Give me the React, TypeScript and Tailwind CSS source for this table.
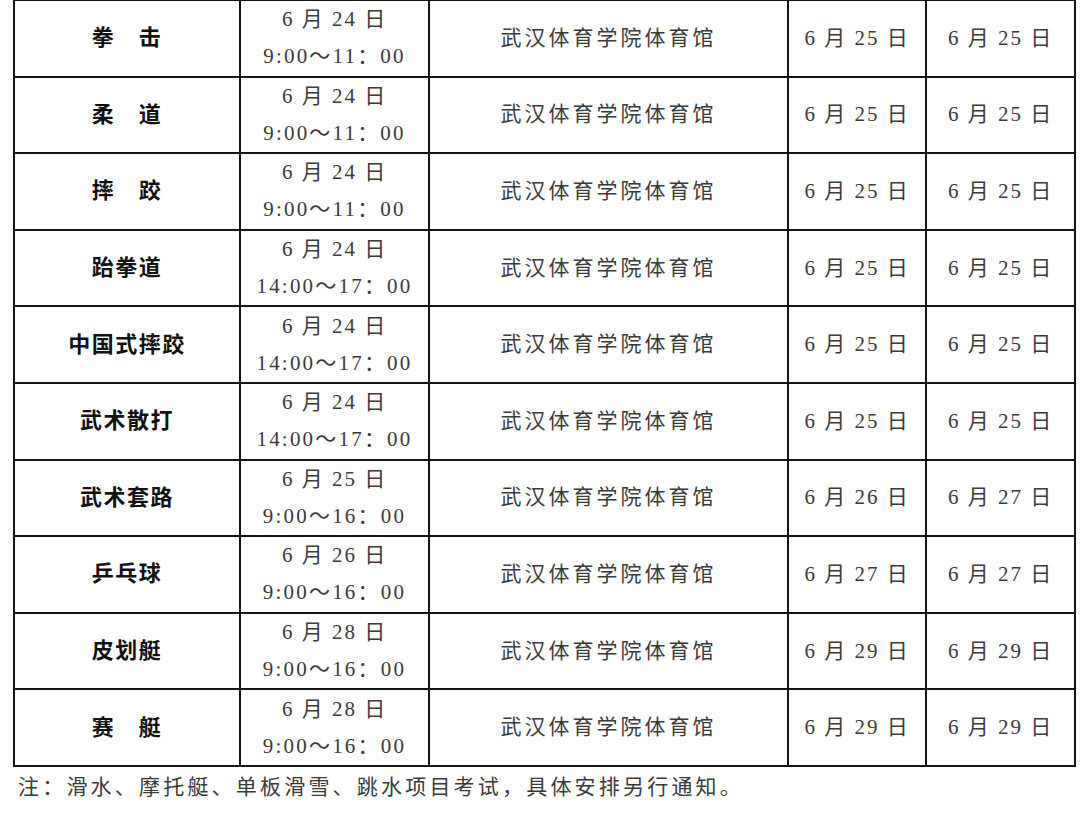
type Row = {
  name: string;
  day: string;
  time: string;
  d1: string;
  d2: string;
};

const rows: Row[] = [
  { name: "拳　击", day: "24", time: "9:00～11：00", d1: "25", d2: "25" },
  { name: "柔　道", day: "24", time: "9:00～11：00", d1: "25", d2: "25" },
  { name: "摔　跤", day: "24", time: "9:00～11：00", d1: "25", d2: "25" },
  { name: "跆拳道", day: "24", time: "14:00～17：00", d1: "25", d2: "25" },
  { name: "中国式摔跤", day: "24", time: "14:00～17：00", d1: "25", d2: "25" },
  { name: "武术散打", day: "24", time: "14:00～17：00", d1: "25", d2: "25" },
  { name: "武术套路", day: "25", time: "9:00～16：00", d1: "26", d2: "27" },
  { name: "乒乓球", day: "26", time: "9:00～16：00", d1: "27", d2: "27" },
  { name: "皮划艇", day: "28", time: "9:00～16：00", d1: "29", d2: "29" },
  { name: "赛　艇", day: "28", time: "9:00～16：00", d1: "29", d2: "29" },
];

const cell =
  "flex flex-col items-center justify-center border-r-2 border-b-2 border-[#151515] h-[76.6px]";

export default function App() {
  return (
    <div
      className="min-h-screen w-[1080px] bg-white text-[#3a3a3a] overflow-hidden"
      style={{ fontFamily: '"Liberation Serif", "Noto Sans CJK SC", serif' }}
    >
      <div className="ml-[13px] w-[1063px] border-l-2 border-t border-[#151515]">
        {rows.map((r, i) => (
          <div
            key={i}
            className="grid grid-cols-[226px_189px_359px_138px_149px]"
          >
            <div className={cell}>
              <span className="text-[22px] font-bold tracking-[1.5px] text-[#111] leading-none">
                {r.name}
              </span>
            </div>
            <div className={cell}>
              <span className="text-[21px] leading-[37px] tracking-[2px]">
                6 月 {r.day} 日
              </span>
              <span className="text-[21px] leading-[37px] tracking-[2.2px]">
                {r.time}
              </span>
            </div>
            <div className={cell}>
              <span className="text-[21px] tracking-[3px] leading-none">
                武汉体育学院体育馆
              </span>
            </div>
            <div className={cell}>
              <span className="text-[21px] tracking-[2px] leading-none">
                6 月 {r.d1} 日
              </span>
            </div>
            <div className={cell}>
              <span className="text-[21px] tracking-[2px] leading-none">
                6 月 {r.d2} 日
              </span>
            </div>
          </div>
        ))}
      </div>
      <p className="pl-[18px] pt-[6px] text-[21px] leading-[28px] tracking-[3.2px]">
        注：滑水、摩托艇、单板滑雪、跳水项目考试，具体安排另行通知。
      </p>
    </div>
  );
}
